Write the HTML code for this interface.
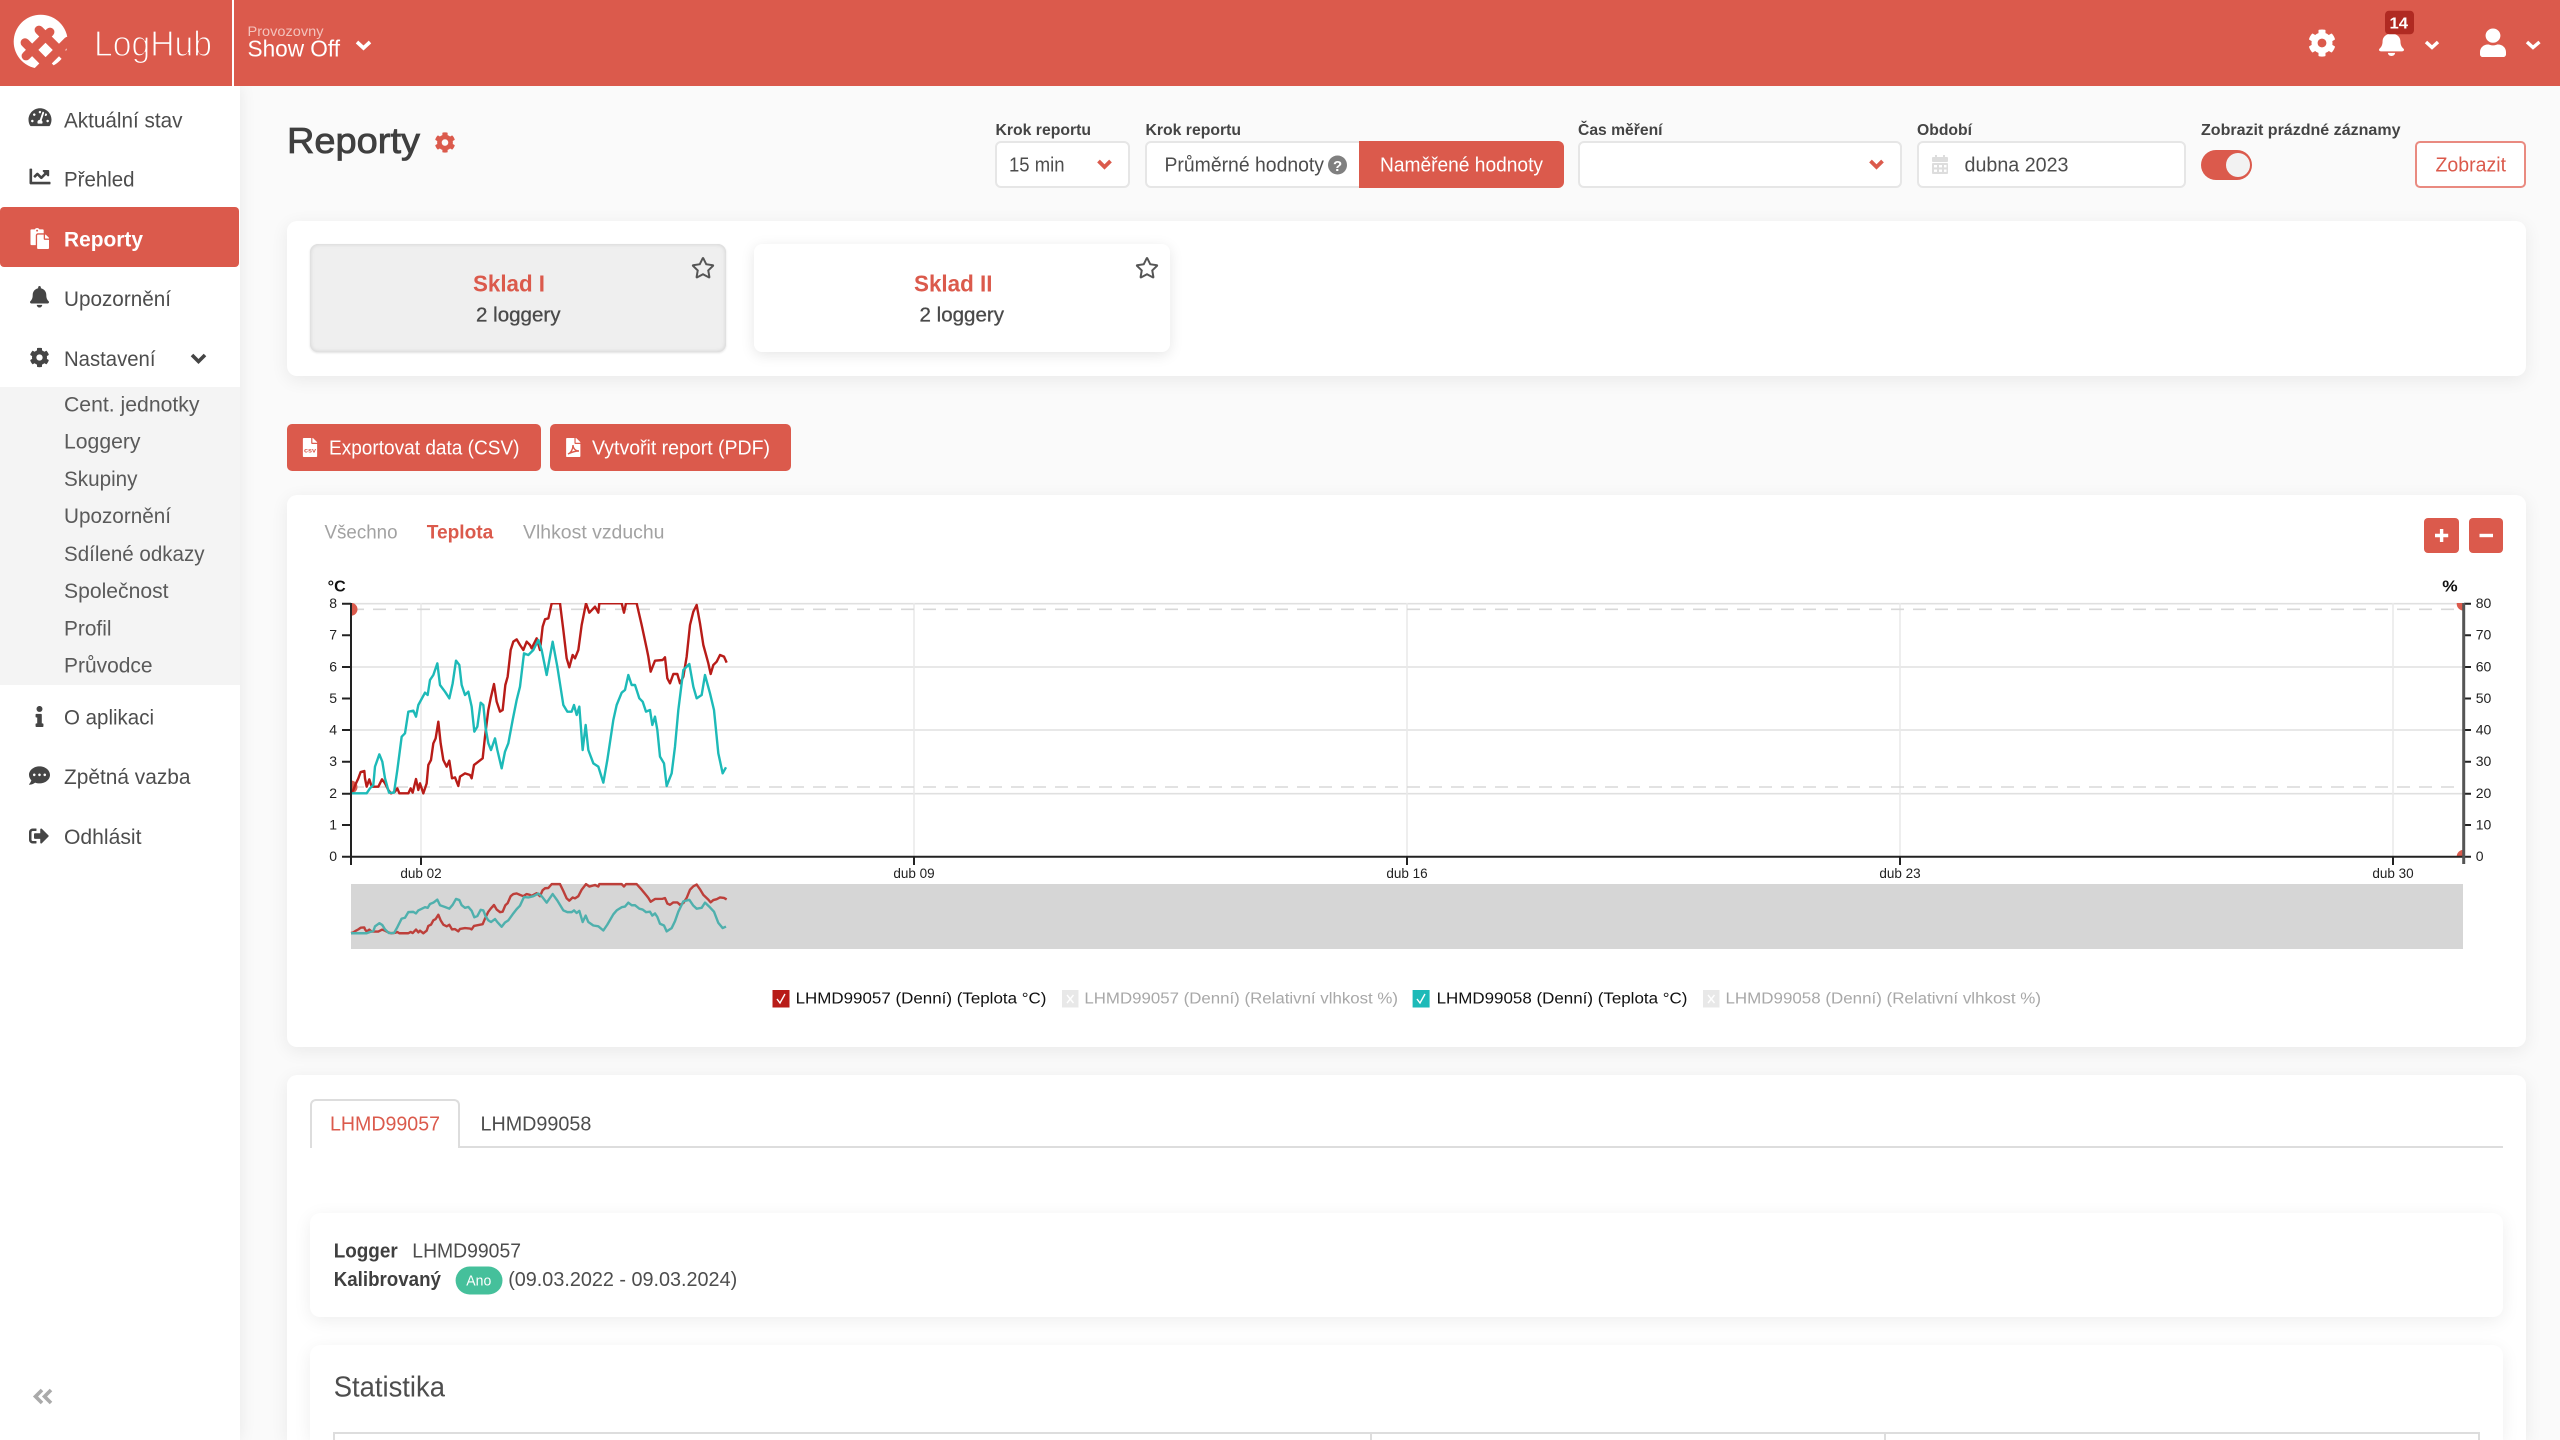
<!DOCTYPE html>
<html lang="cs"><head><meta charset="utf-8"><title>LogHub – Reporty</title>
<style>
html,body{margin:0;padding:0;width:2560px;height:1440px;overflow:hidden;background:#fafafa;font-family:"Liberation Sans",sans-serif}
#page{position:relative;width:2560px;height:1440px;overflow:hidden;background:#fafafa;contain:paint}
.b{position:absolute;box-sizing:border-box}
.card{background:#fff;border-radius:10px;box-shadow:0 4px 18px rgba(0,0,0,.07)}
.inp{background:#fff;border:2px solid #e6e6e6;border-radius:6px;top:141px;height:47px}
.red{background:#db5a4c}
svg.o{position:absolute;left:0;top:0}
text{font-family:"Liberation Sans",sans-serif}
</style></head><body>
<div id="page">
<div class="b" style="left:0;top:86px;width:240px;height:1354px;background:#fff;box-shadow:0 0 16px rgba(0,0,0,.08)"></div>
<div class="b" style="left:0;top:387px;width:240px;height:298px;background:#f4f4f4"></div>
<div class="b red" style="left:0;top:207px;width:239px;height:60px;border-radius:4px"></div>
<div class="b red" style="left:0;top:0;width:2560px;height:86px"></div>
<div class="b" style="left:232px;top:0;width:2px;height:86px;background:#fff"></div>

<div class="b inp" style="left:995px;width:135px"></div>
<div class="b inp" style="left:1145px;width:419px"></div>
<div class="b red" style="left:1359px;top:141px;width:205px;height:47px;border-radius:0 6px 6px 0"></div>
<div class="b inp" style="left:1578px;width:324px"></div>
<div class="b inp" style="left:1917px;width:269px"></div>
<div class="b" style="left:2415px;top:141px;width:111px;height:47px;border:2px solid #e98a80;border-radius:5px;background:#fff"></div>

<div class="b card" style="left:287px;top:221px;width:2239px;height:155px"></div>
<div class="b" style="left:310px;top:244px;width:416px;height:108px;background:#efefef;border-radius:8px;box-shadow:inset 0 0 5px rgba(0,0,0,.14),0 1px 2px rgba(0,0,0,.12)"></div>
<div class="b" style="left:754px;top:244px;width:416px;height:108px;background:#fff;border-radius:8px;box-shadow:0 3px 14px rgba(0,0,0,.10)"></div>

<div class="b red" style="left:287px;top:424px;width:254px;height:47px;border-radius:5px"></div>
<div class="b red" style="left:550px;top:424px;width:241px;height:47px;border-radius:5px"></div>

<div class="b card" style="left:287px;top:495px;width:2239px;height:552px"></div>
<div class="b red" style="left:2424px;top:518px;width:35px;height:35px;border-radius:4px"></div>
<div class="b red" style="left:2469px;top:518px;width:34px;height:35px;border-radius:4px"></div>
<div class="b" style="left:351px;top:884px;width:2112px;height:65px;background:#d6d6d6"></div>

<div class="b card" style="left:287px;top:1075px;width:2239px;height:365px;border-radius:10px 10px 0 0"></div>
<div class="b" style="left:310px;top:1146px;width:2193px;height:2px;background:#ddd"></div>
<div class="b" style="left:310px;top:1099px;width:150px;height:49px;background:#fff;border:2px solid #ddd;border-bottom:0;border-radius:6px 6px 0 0"></div>
<div class="b card" style="left:310px;top:1213px;width:2193px;height:104px"></div>
<div class="b card" style="left:310px;top:1345px;width:2193px;height:95px;border-radius:10px 10px 0 0"></div>
<div class="b" style="left:333px;top:1432px;width:2147px;height:8px;border:2px solid #ddd;border-bottom:0"></div>
<div class="b" style="left:1370px;top:1432px;width:2px;height:8px;background:#ddd"></div>
<div class="b" style="left:1884px;top:1432px;width:2px;height:8px;background:#ddd"></div>

<svg class="o" width="2560" height="1440" viewBox="0 0 2560 1440" xmlns="http://www.w3.org/2000/svg">
<defs>
<symbol id="cog" viewBox="0 0 512 512"><path d="M487.4 315.7l-42.6-24.6c4.3-23.2 4.3-47 0-70.2l42.6-24.6c4.9-2.8 7.1-8.6 5.5-14-11.1-35.6-30-67.8-54.7-94.6-3.8-4.1-10-5.1-14.8-2.3L380.8 110c-17.9-15.4-38.5-27.3-60.8-35.1V25.8c0-5.6-3.9-10.5-9.4-11.7-36.7-8.2-74.3-7.8-109.2 0-5.5 1.2-9.4 6.1-9.4 11.7V75c-22.2 7.9-42.8 19.8-60.8 35.1L88.7 85.5c-4.9-2.8-11-1.9-14.8 2.3-24.7 26.7-43.6 58.9-54.7 94.6-1.7 5.4.6 11.2 5.5 14L67.3 221c-4.3 23.2-4.3 47 0 70.2l-42.6 24.6c-4.9 2.8-7.1 8.6-5.5 14 11.1 35.6 30 67.8 54.7 94.6 3.8 4.1 10 5.1 14.8 2.3l42.6-24.6c17.9 15.4 38.5 27.3 60.8 35.1v49.2c0 5.6 3.9 10.5 9.4 11.7 36.7 8.2 74.3 7.8 109.2 0 5.5-1.2 9.4-6.1 9.4-11.7v-49.2c22.2-7.9 42.8-19.8 60.8-35.1l42.6 24.6c4.9 2.8 11 1.9 14.8-2.3 24.7-26.7 43.6-58.9 54.7-94.6 1.5-5.5-.7-11.3-5.6-14.1zM256 336c-44.1 0-80-35.9-80-80s35.9-80 80-80 80 35.9 80 80-35.9 80-80 80z"/></symbol>
<symbol id="bell" viewBox="0 0 448 512" preserveAspectRatio="none"><path d="M224 512c35.32 0 63.97-28.65 63.97-64H160.03c0 35.35 28.65 64 63.97 64zm215.39-149.71c-19.32-20.76-55.47-51.99-55.47-154.29 0-77.7-54.48-139.9-127.94-155.16V32c0-17.67-14.32-32-31.98-32s-31.98 14.33-31.98 32v20.84C118.56 68.1 64.08 130.3 64.08 208c0 102.3-36.15 133.53-55.47 154.29-6 6.45-8.66 14.16-8.61 21.71.11 16.4 12.98 32 32.1 32h383.8c19.12 0 32-15.6 32.1-32 .05-7.55-2.61-15.27-8.61-21.71z"/></symbol>
<symbol id="star" viewBox="0 0 576 512"><path d="M528.1 171.5L382 150.2 316.7 17.8c-11.7-23.6-45.6-23.9-57.4 0L194 150.2 47.9 171.5c-26.2 3.8-36.7 36.1-17.7 54.6l105.7 103-25 145.5c-4.5 26.3 23.2 46 46.4 33.7L288 439.6l130.7 68.7c23.2 12.2 50.9-7.4 46.4-33.7l-25-145.5 105.7-103c19-18.5 8.5-50.8-17.7-54.6zM388.6 312.3l23.7 138.4L288 385.4l-124.3 65.3 23.7-138.4-100.6-98 139-20.2 62.2-126 62.2 126 139 20.2-100.6 98z"/></symbol>
<symbol id="file" viewBox="0 0 384 512"><path d="M224 136V0H24C10.7 0 0 10.7 0 24v464c0 13.3 10.7 24 24 24h336c13.3 0 24-10.7 24-24V160H248c-13.2 0-24-10.8-24-24zm160-14.1v6.1H256V0h6.1c6.4 0 12.5 2.5 17 7l97.9 98c4.5 4.5 7 10.6 7 16.9z"/></symbol>
<polyline id="rl" fill="none" stroke-width="2.4" stroke-linejoin="round" vector-effect="non-scaling-stroke" points="93,668 100,660 108,640 115,625 122,606 133,603 135,625 140,650 148,628 155,650 175,650 186,628 195,640 205,660 213,670 225,665 232,655 238,670 265,670 272,655 278,668 288,627 295,660 300,640 310,670 320,640 325,585 333,570 340,520 347,505 355,455 362,520 370,570 380,590 388,572 396,625 405,622 415,648 420,620 435,610 450,615 455,625 462,585 475,575 488,565 495,500 505,420 512,385 522,342 530,395 540,425 548,420 556,345 563,320 572,240 580,215 590,208 600,225 610,240 620,215 630,225 635,235 650,205 660,240 668,170 675,148 685,145 695,100 720,100 730,180 740,265 748,292 758,255 765,265 775,240 785,165 798,100 808,128 825,110 835,128 838,100 905,100 912,128 918,100 950,100 965,165 980,235 985,260 992,305 1005,272 1028,270 1035,262 1042,325 1050,340 1060,312 1072,312 1080,340 1090,320 1100,260 1110,165 1120,125 1130,105 1140,160 1150,225 1165,280 1172,312 1180,285 1190,275 1200,255 1212,260 1220,278"/>
<polyline id="tl" fill="none" stroke-width="2.4" stroke-linejoin="round" vector-effect="non-scaling-stroke" points="93,670 140,670 150,655 160,645 165,590 178,553 187,575 195,625 207,668 222,668 232,600 245,500 255,490 265,425 280,422 288,440 295,405 315,368 323,375 330,330 340,315 352,280 360,345 375,365 388,385 398,340 408,272 418,285 425,345 435,375 445,365 455,410 463,485 472,470 482,398 490,405 497,475 505,520 513,540 525,505 532,540 545,595 555,545 565,520 578,450 590,390 600,350 612,250 625,255 640,240 655,210 665,240 680,315 698,215 712,290 730,405 742,425 755,425 762,405 770,435 778,410 788,540 797,465 805,540 820,580 835,590 850,638 862,570 880,450 890,405 905,368 915,360 925,315 935,345 945,345 958,385 968,395 978,425 990,420 997,465 1005,440 1012,480 1020,560 1032,580 1040,648 1055,610 1065,530 1075,420 1090,300 1108,282 1120,350 1130,385 1145,375 1155,315 1170,370 1182,420 1195,550 1208,610 1218,592"/>
<clipPath id="plot"><rect x="351" y="603" width="2113" height="254"/></clipPath>
</defs>

<!-- logo -->
<circle cx="40.7" cy="41.7" r="27" fill="#fff"/>
<g stroke="#db5a4c" stroke-width="8.8" stroke-linecap="round" fill="none">
<line x1="50" y1="32" x2="26" y2="56"/><line x1="39" y1="30" x2="76" y2="67"/><line x1="25" y1="42.6" x2="52" y2="70"/><line x1="68" y1="41" x2="38" y2="71"/>
</g>
<text x="94" y="56" font-size="36" fill="#fff" stroke="#db5a4c" stroke-width="1.25" textLength="118" lengthAdjust="spacingAndGlyphs">LogHub</text>
<text x="247.500" y="36" font-size="14" fill="#f3c3bd" textLength="76" lengthAdjust="spacingAndGlyphs">Provozovny</text>
<text x="247.500" y="56.7" font-size="23.500" fill="#fff" textLength="92.500" lengthAdjust="spacingAndGlyphs">Show Off</text>
<polyline points="357,42 363.5,48 370,42" fill="none" stroke="#fff" stroke-width="3.6"/>

<!-- header right -->
<use href="#cog" x="2308" y="29" width="28" height="28" fill="#fff"/>
<use href="#bell" x="2379" y="31" width="25" height="25" fill="#fff"/>
<rect x="2385" y="10.7" width="29" height="23.6" rx="4" fill="#b02a22"/>
<text x="2389.5" y="28.3" font-size="16" font-weight="bold" fill="#fff" textLength="18.5" lengthAdjust="spacingAndGlyphs">14</text>
<polyline points="2426,42 2432,47.5 2438,42" fill="none" stroke="#fff" stroke-width="3.4"/>
<svg x="2480" y="28.5" width="26" height="28.5" viewBox="0 0 448 512" preserveAspectRatio="none" fill="#fff"><path d="M224 256c70.7 0 128-57.3 128-128S294.7 0 224 0 96 57.3 96 128s57.3 128 128 128zm89.6 32h-16.7c-22.2 10.2-46.9 16-72.9 16s-50.6-5.8-72.9-16h-16.7C60.2 288 0 348.2 0 422.4V464c0 26.5 21.5 48 48 48h352c26.5 0 48-21.5 48-48v-41.6c0-74.2-60.2-134.4-134.4-134.4z"/></svg>
<polyline points="2527,42 2533,47.5 2539.5,42" fill="none" stroke="#fff" stroke-width="3.4"/>

<!-- sidebar -->
<g fill="#454545">
<svg x="28.5" y="107" width="23" height="23" viewBox="0 0 576 576"><path d="M288 32C128.94 32 0 160.94 0 320c0 52.8 14.25 102.26 39.06 144.8 5.61 9.62 16.3 15.2 27.44 15.2h443c11.14 0 21.83-5.58 27.44-15.2C561.75 422.26 576 372.8 576 320c0-159.06-128.94-288-288-288zm0 64c14.71 0 26.58 10.13 30.32 23.65-1.11 2.26-2.64 4.23-3.45 6.67l-9.22 27.67c-5.13 3.49-10.97 6.01-17.64 6.01-17.67 0-32-14.33-32-32S270.33 96 288 96zM96 384c-17.67 0-32-14.33-32-32s14.33-32 32-32 32 14.33 32 32-14.33 32-32 32zm48-160c-17.67 0-32-14.33-32-32s14.33-32 32-32 32 14.33 32 32-14.33 32-32 32zm246.77-72.41l-61.33 184C343.13 347.33 352 364.54 352 384c0 11.72-3.38 22.55-8.88 32H232.88c-5.5-9.45-8.88-20.28-8.88-32 0-33.94 26.5-61.43 59.9-63.59l61.34-184.01c4.17-12.56 17.73-19.45 30.36-15.17 12.57 4.19 19.35 17.77 15.17 30.36zm14.66 57.2l15.52-46.55c3.47-1.29 7.13-2.23 11.05-2.23 17.67 0 32 14.33 32 32s-14.33 32-32 32c-11.38-.01-20.89-6.28-26.57-15.22zM480 384c-17.67 0-32-14.33-32-32s14.33-32 32-32 32 14.33 32 32-14.33 32-32 32z"/></svg>
<svg x="29.5" y="166" width="21" height="21" viewBox="0 0 512 512"><path d="M496 384H64V80c0-8.84-7.16-16-16-16H16C7.16 64 0 71.16 0 80v336c0 17.67 14.33 32 32 32h464c8.84 0 16-7.16 16-16v-32c0-8.84-7.16-16-16-16zM464 96H345.94c-21.38 0-32.09 25.85-16.97 40.97l32.4 32.4L288 242.75l-73.37-73.37c-12.5-12.5-32.76-12.5-45.25 0l-68.69 68.69c-6.25 6.25-6.25 16.38 0 22.63l22.62 22.62c6.25 6.25 16.38 6.25 22.63 0L192 237.25l73.37 73.37c12.5 12.5 32.76 12.5 45.25 0l96-96 32.4 32.4c15.12 15.12 40.97 4.41 40.97-16.97V112c.01-8.84-7.15-16-15.99-16z"/></svg>
<use href="#bell" x="30" y="286" width="19" height="21.5"/>
<use href="#cog" x="29.5" y="347.5" width="20" height="20"/>
<svg x="35.5" y="706" width="8" height="21" viewBox="0 0 192 512"><path d="M20 424.229h20V279.771H20c-11.046 0-20-8.954-20-20V212c0-11.046 8.954-20 20-20h112c11.046 0 20 8.954 20 20v212.229h20c11.046 0 20 8.954 20 20V492c0 11.046-8.954 20-20 20H20c-11.046 0-20-8.954-20-20v-47.771c0-11.046 8.954-20 20-20zM96 0C56.235 0 24 32.235 24 72s32.235 72 72 72 72-32.235 72-72S135.764 0 96 0z"/></svg>
<svg x="29" y="765" width="21" height="21" viewBox="0 0 512 512"><path d="M256 32C114.6 32 0 125.1 0 240c0 49.6 21.4 95 57 130.7C44.5 421.1 2.7 466 2.2 466.5c-2.2 2.3-2.8 5.7-1.5 8.7S4.8 480 8 480c66.3 0 116-31.8 140.6-51.4 32.7 12.3 69 19.4 107.4 19.4 141.4 0 256-93.1 256-208S397.4 32 256 32zM128 272c-17.7 0-32-14.3-32-32s14.3-32 32-32 32 14.3 32 32-14.3 32-32 32zm128 0c-17.7 0-32-14.3-32-32s14.3-32 32-32 32 14.3 32 32-14.3 32-32 32zm128 0c-17.7 0-32-14.3-32-32s14.3-32 32-32 32 14.3 32 32-14.3 32-32 32z"/></svg>
<svg x="29" y="826" width="20" height="20" viewBox="0 0 512 512"><path d="M497 273L329 441c-15 15-41 4.5-41-17v-96H152c-13.3 0-24-10.7-24-24v-96c0-13.3 10.7-24 24-24h136V88c0-21.4 25.9-32 41-17l168 168c9.3 9.4 9.3 24.6 0 34zM192 436v-40c0-6.6-5.4-12-12-12H96c-17.7 0-32-14.3-32-32V160c0-17.7 14.3-32 32-32h84c6.6 0 12-5.4 12-12V76c0-6.6-5.4-12-12-12H96c-53 0-96 43-96 96v192c0 53 43 96 96 96h84c6.6 0 12-5.4 12-12z"/></svg>
</g>
<svg x="30.5" y="228" width="18.5" height="21" viewBox="0 0 448 512" preserveAspectRatio="none" fill="#fff"><path d="M128 184c0-30.879 25.122-56 56-56h136V56c0-13.255-10.745-24-24-24h-80.61C204.306 12.89 183.637 0 160 0s-44.306 12.89-55.39 32H24C10.745 32 0 42.745 0 56v336c0 13.255 10.745 24 24 24h104V184zm32-144c13.255 0 24 10.745 24 24s-10.745 24-24 24-24-10.745-24-24 10.745-24 24-24zm184 248h104v200c0 13.255-10.745 24-24 24H184c-13.255 0-24-10.745-24-24V184c0-13.255 10.745-24 24-24h136v104c0 13.2 10.8 24 24 24zm104-38.059V256h-96v-96h6.059a24 24 0 0 1 16.97 7.029l65.941 65.941a24.002 24.002 0 0 1 7.03 16.971z"/></svg>
<polyline points="192,355 198.5,361.5 205,355" fill="none" stroke="#454545" stroke-width="3.6"/>
<polyline points="42,1390 35.5,1396.5 42,1403" fill="none" stroke="#aaa" stroke-width="3.6"/>
<polyline points="51,1390 44.5,1396.5 51,1403" fill="none" stroke="#aaa" stroke-width="3.6"/>

<g font-size="21" fill="#4d4d4d">
<text x="64" y="127.7" textLength="118.5" lengthAdjust="spacingAndGlyphs">Aktuální stav</text>
<text x="64" y="186.7" textLength="70.5" lengthAdjust="spacingAndGlyphs">Přehled</text>
<text x="64" y="246.7" textLength="79" lengthAdjust="spacingAndGlyphs" font-weight="bold" fill="#fff">Reporty</text>
<text x="64" y="305.9" textLength="107" lengthAdjust="spacingAndGlyphs">Upozornění</text>
<text x="64" y="366" textLength="91.500" lengthAdjust="spacingAndGlyphs">Nastavení</text>
<g fill="#5a5a5a">
<text x="64" y="411.4" textLength="135.500" lengthAdjust="spacingAndGlyphs">Cent. jednotky</text>
<text x="64" y="448.6" textLength="76.500" lengthAdjust="spacingAndGlyphs">Loggery</text>
<text x="64" y="486" textLength="73.500" lengthAdjust="spacingAndGlyphs">Skupiny</text>
<text x="64" y="523" textLength="107" lengthAdjust="spacingAndGlyphs">Upozornění</text>
<text x="64" y="561" textLength="140.500" lengthAdjust="spacingAndGlyphs">Sdílené odkazy</text>
<text x="64" y="598" textLength="104.500" lengthAdjust="spacingAndGlyphs">Společnost</text>
<text x="64" y="635.3" textLength="47.500" lengthAdjust="spacingAndGlyphs">Profil</text>
<text x="64" y="672.5" textLength="88.500" lengthAdjust="spacingAndGlyphs">Průvodce</text>
</g>
<text x="64" y="724.7" textLength="90" lengthAdjust="spacingAndGlyphs">O aplikaci</text>
<text x="64" y="784" textLength="126.500" lengthAdjust="spacingAndGlyphs">Zpětná vazba</text>
<text x="64" y="844" textLength="77.500" lengthAdjust="spacingAndGlyphs">Odhlásit</text>
</g>

<!-- title -->
<text x="287" y="153" font-size="36" fill="#3f3f3f" stroke="#3f3f3f" stroke-width=".8" textLength="133" lengthAdjust="spacingAndGlyphs">Reporty</text>
<use href="#cog" x="434.5" y="132" width="21" height="21" fill="#db5a4c"/>

<!-- filters -->
<g font-size="15.5" font-weight="bold" fill="#444">
<text x="995.5" y="135" textLength="95.5" lengthAdjust="spacingAndGlyphs">Krok reportu</text>
<text x="1145.5" y="135" textLength="95.5" lengthAdjust="spacingAndGlyphs">Krok reportu</text>
<text x="1578" y="135" textLength="84.500" lengthAdjust="spacingAndGlyphs">Čas měření</text>
<text x="1917" y="135" textLength="55" lengthAdjust="spacingAndGlyphs">Období</text>
<text x="2201" y="135" textLength="199.500" lengthAdjust="spacingAndGlyphs">Zobrazit prázdné záznamy</text>
</g>
<g font-size="20.5" fill="#4d4d4d">
<text x="1009" y="171.500" textLength="55.500" lengthAdjust="spacingAndGlyphs">15 min</text>
<text x="1164.5" y="171.500" textLength="159.500" lengthAdjust="spacingAndGlyphs">Průměrné hodnoty</text>
<text x="1964.5" y="171.500" textLength="104" lengthAdjust="spacingAndGlyphs">dubna 2023</text>
</g>
<text x="1380" y="171.500" font-size="20.5" fill="#fff" textLength="163" lengthAdjust="spacingAndGlyphs">Naměřené hodnoty</text>
<text x="2435.5" y="171.500" font-size="20.5" fill="#db5a4c" textLength="70.500" lengthAdjust="spacingAndGlyphs">Zobrazit</text>
<circle cx="1337.5" cy="165" r="9.5" fill="#808080"/>
<text x="1333" y="171" font-size="15" font-weight="bold" fill="#fff">?</text>
<polyline points="1098.5,161 1104.5,167 1110.5,161" fill="none" stroke="#db5a4c" stroke-width="3.8"/>
<polyline points="1870.5,161 1876.5,167 1882.5,161" fill="none" stroke="#db5a4c" stroke-width="3.8"/>
<g fill="#ddd"><rect x="1932" y="157" width="16" height="5" rx="1"/><rect x="1935" y="155" width="2" height="4"/><rect x="1943" y="155" width="2" height="4"/><rect x="1932" y="163" width="16" height="11" rx="1"/></g>
<g fill="#fff"><rect x="1934" y="165" width="3" height="2.4"/><rect x="1939" y="165" width="3" height="2.4"/><rect x="1944" y="165" width="2.5" height="2.4"/><rect x="1934" y="169.5" width="3" height="2.4"/><rect x="1939" y="169.5" width="3" height="2.4"/><rect x="1944" y="169.5" width="2.5" height="2.4"/></g>
<rect x="2201" y="150" width="51" height="30" rx="15" fill="#db5a4c"/>
<circle cx="2238" cy="165" r="12" fill="#f2f2f2"/>

<!-- tiles -->
<text x="473" y="291.7" font-size="23" font-weight="bold" fill="#db5a4c" textLength="72" lengthAdjust="spacingAndGlyphs">Sklad I</text>
<text x="476" y="321.300" font-size="20.5" fill="#4a4a4a" stroke="#4a4a4a" stroke-width=".3" textLength="84.500" lengthAdjust="spacingAndGlyphs">2 loggery</text>
<text x="914" y="291.7" font-size="23" font-weight="bold" fill="#db5a4c" textLength="78.5" lengthAdjust="spacingAndGlyphs">Sklad II</text>
<text x="919.500" y="321.300" font-size="20.5" fill="#4a4a4a" stroke="#4a4a4a" stroke-width=".3" textLength="84.500" lengthAdjust="spacingAndGlyphs">2 loggery</text>
<use href="#star" x="691" y="257" width="24" height="21.500" fill="#555"/>
<use href="#star" x="1135" y="257" width="24" height="21.500" fill="#555"/>

<!-- export -->
<use href="#file" x="302.5" y="438" width="15" height="19" fill="#fff"/>
<text x="304" y="452.5" font-size="6" font-weight="bold" fill="#db5a4c" textLength="12" lengthAdjust="spacingAndGlyphs">csv</text>
<text x="329" y="454.3" font-size="20.5" fill="#fff" textLength="190.500" lengthAdjust="spacingAndGlyphs">Exportovat data (CSV)</text>
<use href="#file" x="566" y="438" width="14.5" height="19" fill="#fff"/>
<path d="M568 454c3-1 5-5 5-9 0 3 2 6 6 6-3 0-7 1-11 3z" fill="none" stroke="#db5a4c" stroke-width="1.4"/>
<text x="592" y="454.3" font-size="20.5" fill="#fff" textLength="178" lengthAdjust="spacingAndGlyphs">Vytvořit report (PDF)</text>

<!-- chart tabs -->
<g font-size="19.5">
<text x="324.500" y="538.3" fill="#a2a2a2" textLength="73" lengthAdjust="spacingAndGlyphs">Všechno</text>
<text x="426.7" y="538.3" fill="#db5a4c" font-weight="bold" textLength="66.6" lengthAdjust="spacingAndGlyphs">Teplota</text>
<text x="523" y="538.3" fill="#a2a2a2" textLength="141.500" lengthAdjust="spacingAndGlyphs">Vlhkost vzduchu</text>
</g>
<path d="M2441.6 529v13M2435 535.5h13.2" stroke="#fff" stroke-width="3.4" fill="none"/>
<path d="M2479.5 535.5h13.5" stroke="#fff" stroke-width="3.4" fill="none"/>

<!-- chart grid -->
<g stroke="#e0e0e0" stroke-width="1.6" fill="none">
<line x1="351" x2="2464" y1="603.7" y2="603.7"/>
<line x1="351" x2="2464" y1="667" y2="667"/>
<line x1="351" x2="2464" y1="730" y2="730"/>
<line x1="351" x2="2464" y1="793.7" y2="793.7"/>
<line x1="421" x2="421" y1="603" y2="857" stroke="#e9e9e9"/>
<line x1="914" x2="914" y1="603" y2="857" stroke="#e9e9e9"/>
<line x1="1407" x2="1407" y1="603" y2="857" stroke="#e9e9e9"/>
<line x1="1900" x2="1900" y1="603" y2="857" stroke="#e9e9e9"/>
<line x1="2393" x2="2393" y1="603" y2="857" stroke="#e9e9e9"/>
<line x1="351" x2="2464" y1="609.3" y2="609.3" stroke="#d8d8d8" stroke-dasharray="13 9"/>
<line x1="351" x2="2464" y1="787" y2="787" stroke="#d8d8d8" stroke-dasharray="13 9"/>
</g>
<!-- series -->
<g clip-path="url(#plot)">
<circle cx="351" cy="609.3" r="6.5" fill="#db5a4c"/>
<circle cx="351" cy="787" r="6.5" fill="#db5a4c"/>
<circle cx="2463.7" cy="603.7" r="7" fill="#db5a4c"/>
<circle cx="2463.7" cy="856.7" r="7" fill="#db5a4c"/>
<g transform="translate(320 570) scale(.33333)"><use href="#rl" stroke="#b81c18"/><use href="#tl" stroke="#1dbab8"/></g>
</g>
<!-- axes -->
<g stroke="#222" stroke-width="2" fill="none">
<line x1="351" x2="351" y1="603" y2="865"/>
<line x1="350" x2="2464" y1="856.7" y2="856.7"/>
<line x1="421" x2="421" y1="857" y2="865"/><line x1="914" x2="914" y1="857" y2="865"/><line x1="1407" x2="1407" y1="857" y2="865"/><line x1="1900" x2="1900" y1="857" y2="865"/><line x1="2393" x2="2393" y1="857" y2="865"/>
<path d="M342 603.7h9M342 635.3h9M342 667h9M342 698.5h9M342 730h9M342 761.8h9M342 793.7h9M342 825h9M342 856.7h9"/>
<path d="M2464 603.7h7M2464 635.3h7M2464 667h7M2464 698.5h7M2464 730h7M2464 761.8h7M2464 793.7h7M2464 825h7M2464 856.7h7"/>
</g>
<line x1="2463.7" x2="2463.7" y1="603" y2="864" stroke="#555" stroke-width="3"/>
<g font-size="14" fill="#222" text-anchor="end">
<text x="337" y="608">8</text><text x="337" y="639.6">7</text><text x="337" y="671.3">6</text><text x="337" y="702.8">5</text><text x="337" y="734.4">4</text><text x="337" y="766">3</text><text x="337" y="798">2</text><text x="337" y="829.4">1</text><text x="337" y="861">0</text>
</g>
<g font-size="14" fill="#222">
<text x="2475.7" y="608">80</text><text x="2475.7" y="639.6">70</text><text x="2475.7" y="671.3">60</text><text x="2475.7" y="702.8">50</text><text x="2475.7" y="734.4">40</text><text x="2475.7" y="766">30</text><text x="2475.7" y="798">20</text><text x="2475.7" y="829.4">10</text><text x="2475.7" y="861">0</text>
</g>
<g font-size="13.5" fill="#222" text-anchor="middle">
<text x="421" y="878">dub 02</text><text x="914" y="878">dub 09</text><text x="1407" y="878">dub 16</text><text x="1900" y="878">dub 23</text><text x="2393" y="878">dub 30</text>
</g>
<text x="327.7" y="591.7" font-size="16" font-weight="bold" fill="#111" textLength="18" lengthAdjust="spacingAndGlyphs">°C</text>
<text x="2442.3" y="591.7" font-size="16" font-weight="bold" fill="#111" textLength="15.4" lengthAdjust="spacingAndGlyphs">%</text>
<!-- navigator -->
<g transform="translate(320 875.5) scale(.33333 .0862)"><use href="#rl" stroke="#bd3f3a"/><use href="#tl" stroke="#4fb0ad"/></g>

<!-- legend -->
<rect x="772.5" y="990" width="17" height="17.5" fill="#b81c18"/>
<polyline points="777,999 780,1003 785,994" fill="none" stroke="#fff" stroke-width="1.4"/>
<text x="795.6" y="1003.3" font-size="15.5" fill="#111" textLength="250.8" lengthAdjust="spacingAndGlyphs">LHMD99057 (Denní) (Teplota °C)</text>
<rect x="1062" y="990" width="16.5" height="17.5" fill="#e8e8e8"/>
<path d="M1067 995l6.5 8M1073.5 995l-6.500 8" stroke="#fff" stroke-width="1.4"/>
<text x="1084.4" y="1003.3" font-size="15.5" fill="#a8a8a8" textLength="313.6" lengthAdjust="spacingAndGlyphs">LHMD99057 (Denní) (Relativní vlhkost %)</text>
<rect x="1412.6" y="990" width="17" height="17.5" fill="#1dbab8"/>
<polyline points="1417,999 1420,1003 1425,994" fill="none" stroke="#fff" stroke-width="1.4"/>
<text x="1436.6" y="1003.3" font-size="15.5" fill="#111" textLength="250.8" lengthAdjust="spacingAndGlyphs">LHMD99058 (Denní) (Teplota °C)</text>
<rect x="1703" y="990" width="16.5" height="17.5" fill="#e8e8e8"/>
<path d="M1708 995l6.500 8M1714.500 995l-6.500 8" stroke="#fff" stroke-width="1.4"/>
<text x="1725.5" y="1003.3" font-size="15.5" fill="#a8a8a8" textLength="315.5" lengthAdjust="spacingAndGlyphs">LHMD99058 (Denní) (Relativní vlhkost %)</text>

<!-- bottom -->
<text x="330" y="1130.5" font-size="20" fill="#db5a4c" textLength="110" lengthAdjust="spacingAndGlyphs">LHMD99057</text>
<text x="480.5" y="1130.5" font-size="20" fill="#4d4d4d" textLength="110.8" lengthAdjust="spacingAndGlyphs">LHMD99058</text>
<text x="333.7" y="1257.3" font-size="20.5" font-weight="bold" fill="#3f3f3f" textLength="64" lengthAdjust="spacingAndGlyphs">Logger</text>
<text x="412.3" y="1257.3" font-size="20" fill="#4d4d4d" textLength="108.7" lengthAdjust="spacingAndGlyphs">LHMD99057</text>
<text x="333.7" y="1286.2" font-size="20.5" font-weight="bold" fill="#3f3f3f" textLength="107.3" lengthAdjust="spacingAndGlyphs">Kalibrovaný</text>
<rect x="455.6" y="1266.500" width="46.900" height="28" rx="14" fill="#45c09b"/>
<text x="466.3" y="1285.500" font-size="15" fill="#fff" textLength="25" lengthAdjust="spacingAndGlyphs">Ano</text>
<text x="508.200" y="1286.2" font-size="20.5" fill="#4d4d4d" textLength="229" lengthAdjust="spacingAndGlyphs">(09.03.2022 - 09.03.2024)</text>
<text x="333.7" y="1396.5" font-size="29" fill="#4d4d4d" textLength="111.300" lengthAdjust="spacingAndGlyphs">Statistika</text>
</svg>
</div>
</body></html>
